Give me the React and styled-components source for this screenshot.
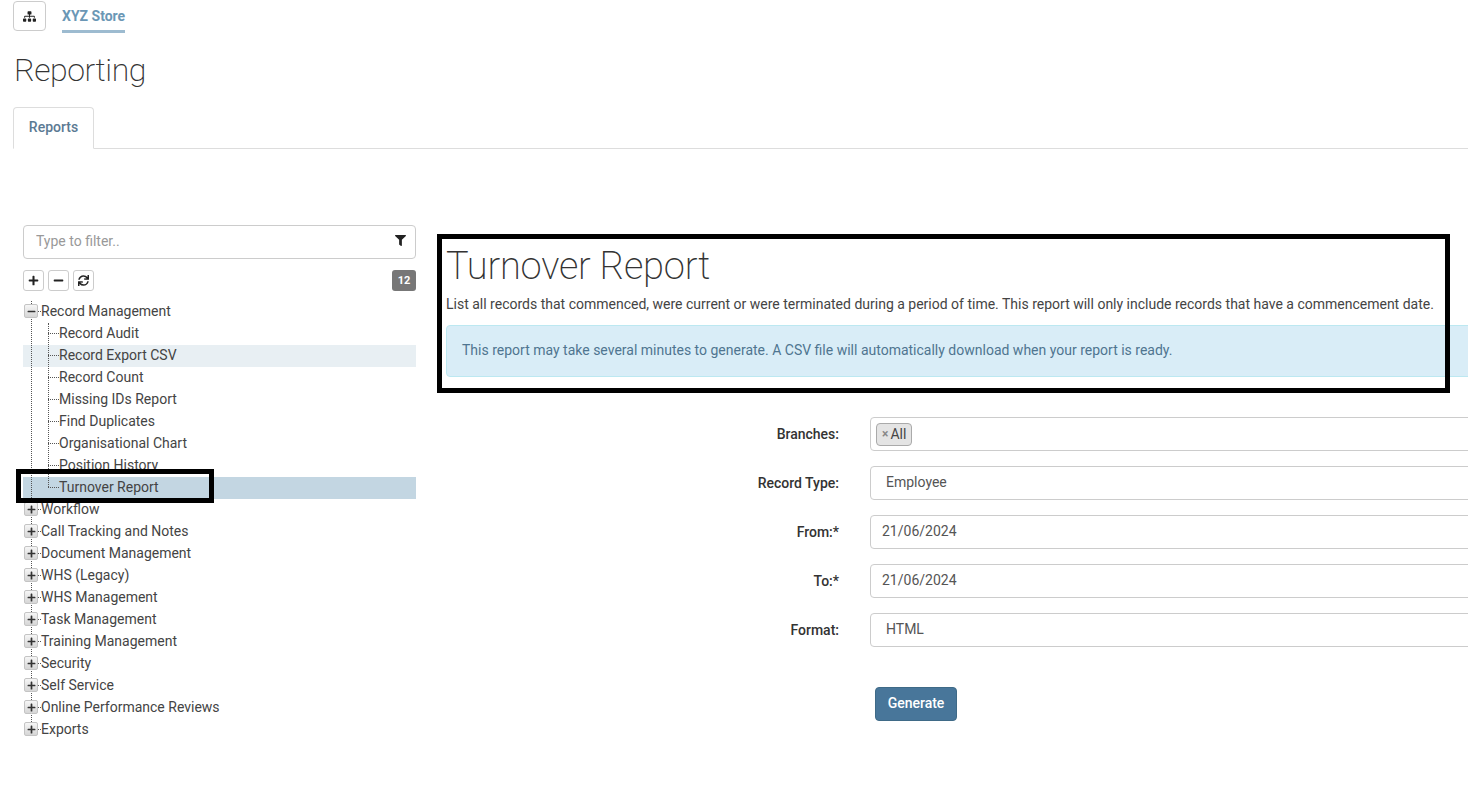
import React from "react";
import styled, { createGlobalStyle } from "styled-components";
import { FaSitemap, FaFilter, FaPlus, FaMinus, FaSync } from "react-icons/fa";

const GlobalStyle = createGlobalStyle`
  html, body {
    margin: 0;
    padding: 0;
    height: 100%;
    overflow: hidden;
    background: #fff;
  }
  body {
    font-family: Roboto, "Liberation Sans", Arial, sans-serif;
    font-size: 14px;
    color: #444;
  }
  * { box-sizing: border-box; }
`;

const Page = styled.div`
  position: relative;
  width: 1468px;
  height: 791px;
  overflow: hidden;
`;

const TopBar = styled.div`
  display: flex;
  align-items: flex-start;
  padding: 1px 0 0 13px;
  gap: 16px;
`;

const IconButton = styled.button`
  display: flex;
  align-items: center;
  justify-content: center;
  width: 33px;
  height: 30px;
  padding: 0;
  border: 1px solid #ccc;
  border-radius: 4px;
  background: #fff;
  color: #222;
  font-size: 13px;
`;

const StoreTab = styled.a`
  display: block;
  height: 32px;
  padding-top: 6px;
  line-height: 18px;
  font-weight: 700;
  color: #6b97b5;
  border-bottom: 3px solid #9dbbd0;
`;

const PageTitle = styled.h1`
  margin: 17px 0 0 14px;
  font-size: 32px;
  line-height: 40px;
  font-weight: 200;
  letter-spacing: -0.45px;
  color: #333;
`;

const Tabs = styled.div`
  display: flex;
  margin: 17px 0 0 13px;
  height: 42px;
  border-bottom: 1px solid #ddd;
`;

const Tab = styled.div`
  width: 81px;
  height: 42px;
  padding-top: 10px;
  line-height: 18px;
  text-align: center;
  font-weight: 500;
  color: #5b7a93;
  background: #fff;
  border: 1px solid #ddd;
  border-bottom-color: #fff;
  border-radius: 4px 4px 0 0;
`;

const Content = styled.div`
  display: flex;
  gap: 30px;
  margin: 76px 0 0 23px;
`;

const Sidebar = styled.aside`
  flex: 0 0 393px;
`;

const FilterBox = styled.div`
  position: relative;
  height: 34px;
`;

const FilterInput = styled.input`
  width: 100%;
  height: 34px;
  padding: 0 30px 2px 12px;
  border: 1px solid #ccc;
  border-radius: 4px;
  font: inherit;
  color: #555;
  &::placeholder { color: #999; opacity: 1; }
`;

const FilterIcon = styled.span`
  position: absolute;
  right: 10px;
  top: 10px;
  display: flex;
  color: #222;
  font-size: 11px;
`;

const TreeTools = styled.div`
  display: flex;
  align-items: center;
  gap: 4px;
  margin-top: 11px;
`;

const ToolButton = styled.button`
  display: flex;
  align-items: center;
  justify-content: center;
  width: 21px;
  height: 21px;
  padding: 0;
  border: 1px solid #ccc;
  border-radius: 3px;
  background: #fff;
  color: #222;
  font-size: 11px;
`;

const Badge = styled.span`
  margin-left: auto;
  width: 24px;
  height: 21px;
  line-height: 21px;
  text-align: center;
  border-radius: 3px;
  background: #777;
  color: #fff;
  font-size: 11px;
  font-weight: 700;
`;

const Tree = styled.div`
  position: relative;
  margin-top: 10px;
  &::before {
    content: "";
    position: absolute;
    left: 8px;
    top: 0;
    bottom: 11px;
    border-left: 1px dotted #555;
    z-index: 1;
  }
`;

const Row = styled.div`
  display: flex;
  align-items: center;
  height: 22px;
  padding-bottom: 2px;
  line-height: 22px;
  color: #444;
  white-space: nowrap;
  padding-left: ${(p) => (p.$child ? "25px" : "1px")};
  background: ${(p) =>
    p.$state === "selected" ? "#c3d6e2" : p.$state === "hover" ? "#e8eff3" : "transparent"};
`;

const Expander = styled.span`
  position: relative;
  z-index: 2;
  display: flex;
  align-items: center;
  justify-content: center;
  flex: 0 0 14px;
  height: 14px;
  border: 1px solid #c4c4c4;
  border-radius: 2px;
  background: linear-gradient(#f6f6f6, #d6d6d6);
  color: #333;
  font-size: 9px;
`;

const Connector = styled.span`
  flex: 0 0 ${(p) => (p.$child ? "11px" : "3px")};
  height: 0;
  border-top: 1px dotted #555;
`;

const Children = styled.div`
  position: relative;
  &::before {
    content: "";
    position: absolute;
    left: 25px;
    top: 0;
    bottom: 12px;
    border-left: 1px dotted #555;
  }
`;

const Main = styled.main`
  flex: 0 0 1100px;
  padding-top: 18px;
`;

const ReportTitle = styled.h2`
  margin: 0;
  font-size: 38px;
  line-height: 46px;
  font-weight: 200;
  letter-spacing: -0.2px;
  color: #333;
`;

const Description = styled.p`
  margin: 5px 0 0;
  line-height: 20px;
  color: #444;
`;

const Notice = styled.div`
  height: 52px;
  margin-top: 11px;
  padding: 0 15px;
  line-height: 48px;
  color: #4f7590;
  background: #d9edf7;
  border: 1px solid #bce8f1;
  border-radius: 4px;
`;

const ReportForm = styled.form`
  display: grid;
  grid-template-columns: 393px 700px;
  column-gap: 31px;
  row-gap: 15px;
  margin-top: 40px;
`;

const Label = styled.label`
  line-height: 34px;
  text-align: right;
  font-weight: 500;
  color: #333;
`;

const Field = styled.div`
  display: flex;
  align-items: center;
  height: 34px;
  padding-left: ${(p) => (p.$select ? "15px" : "11px")};
  padding-bottom: 2px;
  border: 1px solid #ccc;
  border-radius: 4px;
  color: #555;
`;

const Tag = styled.span`
  display: flex;
  align-items: center;
  gap: 2px;
  height: 23px;
  padding: 0 5px;
  margin-left: -6px;
  margin-top: 2px;
  border: 1px solid #aaa;
  border-radius: 4px;
  background: #e4e4e4;
  color: #444;
`;

const TagRemove = styled.span`
  color: #888;
  font-weight: 700;
  font-size: 12px;
`;

const Generate = styled.button`
  grid-column: 2;
  justify-self: start;
  width: 82px;
  height: 34px;
  margin: 25px 0 0 5px;
  padding: 0 0 2px;
  border: 1px solid #3f6a87;
  border-radius: 4px;
  background: #48769a;
  color: #fff;
  font: inherit;
  font-weight: 500;
`;

// black marks drawn on top of the screenshot
const Callout = styled.div`
  position: absolute;
  left: ${(p) => p.$x}px;
  top: ${(p) => p.$y}px;
  width: ${(p) => p.$w}px;
  height: ${(p) => p.$h}px;
  border: 5px solid #000;
  z-index: 5;
`;

const recordReports = [
  { name: "Record Audit" },
  { name: "Record Export CSV", state: "hover" },
  { name: "Record Count" },
  { name: "Missing IDs Report" },
  { name: "Find Duplicates" },
  { name: "Organisational Chart" },
  { name: "Position History" },
  { name: "Turnover Report", state: "selected" },
];

const otherGroups = [
  "Workflow",
  "Call Tracking and Notes",
  "Document Management",
  "WHS (Legacy)",
  "WHS Management",
  "Task Management",
  "Training Management",
  "Security",
  "Self Service",
  "Online Performance Reviews",
  "Exports",
];

const App = () => {
  return (
    <Page>
      <GlobalStyle />
      <TopBar>
        <IconButton>
          <FaSitemap />
        </IconButton>
        <StoreTab>XYZ Store</StoreTab>
      </TopBar>
      <PageTitle>Reporting</PageTitle>
      <Tabs>
        <Tab>Reports</Tab>
      </Tabs>
      <Content>
        <Sidebar>
          <FilterBox>
            <FilterInput placeholder="Type to filter.." />
            <FilterIcon>
              <FaFilter />
            </FilterIcon>
          </FilterBox>
          <TreeTools>
            <ToolButton>
              <FaPlus />
            </ToolButton>
            <ToolButton>
              <FaMinus />
            </ToolButton>
            <ToolButton>
              <FaSync />
            </ToolButton>
            <Badge>12</Badge>
          </TreeTools>
          <Tree>
            <Row>
              <Expander>
                <FaMinus />
              </Expander>
              <Connector />
              Record Management
            </Row>
            <Children>
              {recordReports.map((report) => (
                <Row key={report.name} $child $state={report.state}>
                  <Connector $child />
                  {report.name}
                </Row>
              ))}
            </Children>
            {otherGroups.map((group) => (
              <Row key={group}>
                <Expander>
                  <FaPlus />
                </Expander>
                <Connector />
                {group}
              </Row>
            ))}
          </Tree>
        </Sidebar>
        <Main>
          <ReportTitle>Turnover Report</ReportTitle>
          <Description>
            List all records that commenced, were current or were terminated during a period of
            time. This report will only include records that have a commencement date.
          </Description>
          <Notice>
            This report may take several minutes to generate. A CSV file will automatically
            download when your report is ready.
          </Notice>
          <ReportForm>
            <Label>Branches:</Label>
            <Field>
              <Tag>
                <TagRemove>×</TagRemove>All
              </Tag>
            </Field>
            <Label>Record Type:</Label>
            <Field $select>Employee</Field>
            <Label>From:*</Label>
            <Field>21/06/2024</Field>
            <Label>To:*</Label>
            <Field>21/06/2024</Field>
            <Label>Format:</Label>
            <Field $select>HTML</Field>
            <Generate type="button">Generate</Generate>
          </ReportForm>
        </Main>
      </Content>
      <Callout $x={437} $y={234} $w={1013} $h={159} />
      <Callout $x={16} $y={469} $w={198} $h={34} />
    </Page>
  );
};

export default App;
